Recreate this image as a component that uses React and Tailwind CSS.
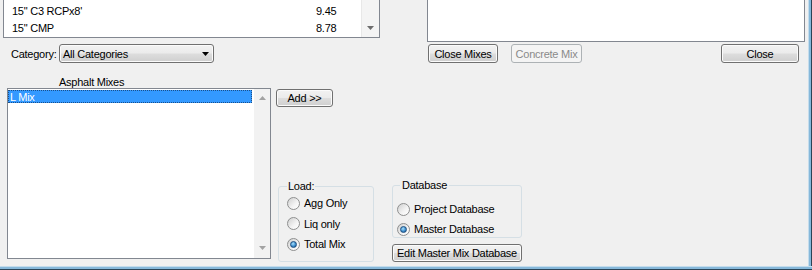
import React from 'react';

const face =
  'rounded-[3px] border border-[#707070] bg-[linear-gradient(to_bottom,#f2f2f2_0%,#ebebeb_48%,#dddddd_52%,#cfcfcf_100%)] shadow-[inset_0_0_0_1px_#fbfbfb] text-black';
const btn = `flex items-center justify-center ${face}`;

function Arrow({ up, className }) {
  return (
    <svg width="7" height="4" viewBox="0 0 7 4" className={className}>
      <polygon points={up ? '0,4 7,4 3.5,0' : '0,0 7,0 3.5,4'} fill="currentColor" />
    </svg>
  );
}

function Radio({ checked, label }) {
  return (
    <div className="flex h-[20px] items-center gap-[4px]">
      <span className="flex h-[13px] w-[13px] items-center justify-center rounded-full border border-[#8e8f8f] bg-[linear-gradient(135deg,#cfcfcf,#f4f4f4_60%,#ffffff)]">
        {checked && (
          <span className="h-[7px] w-[7px] rounded-full border border-[#1e4f80] bg-[radial-gradient(circle_at_40%_35%,#a9e0fb,#3d8fd0_55%,#174a7c)]" />
        )}
      </span>
      <span>{label}</span>
    </div>
  );
}

export default function App() {
  return (
    <div className="flex h-[270px] w-[812px] flex-col overflow-hidden font-['Liberation_Sans',Arial,sans-serif] text-[11px] leading-[12px] tracking-[-0.25px] text-black">
      <div className="flex h-[266px]">
        <div className="flex w-[808px] flex-col bg-[#f0f0f0]">
          {/* top row */}
          <div className="flex h-[63px]">
            <div className="ml-[3px] flex w-[377px] flex-col">
              <div className="flex h-[38px] border-x border-b border-[#828790] bg-white">
                <div className="flex-1 pt-[2px] pl-[8px]">
                  <div className="flex h-[17px] items-center">
                    <span className="w-[304px]">{'15" C3 RCPx8\''}</span>
                    <span>9.45</span>
                  </div>
                  <div className="flex h-[17px] items-center">
                    <span className="w-[304px]">{'15" CMP'}</span>
                    <span>8.78</span>
                  </div>
                </div>
                <div className="flex w-[18px] flex-col items-center justify-end border-l border-[#e8e8e8] bg-[#f4f4f4] pb-[7px]">
                  <Arrow className="text-[#6d6d6d]" />
                </div>
              </div>
              <div className="mt-[6px] flex items-center pl-[8px]">
                <span className="w-[48px]">Category:</span>
                <div className={`${face} flex h-[19px] w-[155px] items-center justify-between pr-[4px] pl-[3px]`}>
                  <span>All Categories</span>
                  <Arrow className="text-black" />
                </div>
              </div>
            </div>
            <div className="ml-[47px] flex w-[378px] flex-col">
              <div className="h-[42px] border-x border-b border-[#828790] bg-white" />
              <div className="mt-[2px] flex">
                <div className={`${btn} ml-[1px] h-[19px] w-[70px]`}>Close Mixes</div>
                <div className="ml-[13px] flex h-[19px] w-[71px] items-center justify-center rounded-[3px] border border-[#adb2b5] bg-[#f4f4f4] text-[#8a8a8a]">
                  Concrete Mix
                </div>
                <div className={`${btn} mr-[6px] ml-auto h-[19px] w-[78px]`}>Close</div>
              </div>
            </div>
          </div>

          {/* bottom area */}
          <div className="flex flex-1">
            <div className="ml-[7px] flex w-[264px] flex-col">
              <div className="mt-[13px] h-[12px] pl-[52px]">Asphalt Mixes</div>
              <div className="flex h-[171px] border border-[#828790] bg-white">
                <div className="flex-1 pt-[1px] pr-[2px]">
                  <div className="flex h-[13px] items-center border border-dotted border-[#1a4f8a] bg-[#3399ff] pl-[1px] text-white">
                    L Mix
                  </div>
                </div>
                <div className="flex w-[16px] flex-col items-center justify-between bg-[#f2f2f2] pt-[7px] pb-[8px]">
                  <Arrow up className="text-[#a3a3a3]" />
                  <Arrow className="text-[#a3a3a3]" />
                </div>
              </div>
            </div>

            <div className="ml-[5px] flex w-[98px] flex-col pb-[4px]">
              <div className={`${btn} mt-[26px] h-[18px] w-[57px]`}>Add &gt;&gt;</div>
              <fieldset className="mt-auto ml-[2px] h-[82px] w-[96px] rounded-[3px] border border-[#d5dfe5] px-[8px] pt-[1px] pb-[8px]">
                <legend className="px-[1px]">Load:</legend>
                <div className="flex flex-col gap-[0.5px]">
                  <Radio label="Agg Only" />
                  <Radio label="Liq only" />
                  <Radio checked label="Total Mix" />
                </div>
              </fieldset>
            </div>

            <div className="ml-[18px] flex w-[130px] flex-col justify-end pb-[4px]">
              <fieldset className="h-[59px] rounded-[3px] border border-[#d5dfe5] px-[4px] pt-[8px]">
                <legend className="ml-[3px] px-[2px]">Database</legend>
                <Radio label="Project Database" />
                <Radio checked label="Master Database" />
              </fieldset>
              <div className={`${btn} mt-[6px] h-[18px] w-[130px]`}>Edit Master Mix Database</div>
            </div>
          </div>
        </div>
        <div className="w-[4px] border-l border-[#c4dcec] border-r border-r-[#2a4457] bg-[#86b8da]" />
      </div>
      <div className="h-[4px] border-t border-[#c4dcec] border-b border-b-[#2a4457] bg-[#86b8da]" />
    </div>
  );
}
